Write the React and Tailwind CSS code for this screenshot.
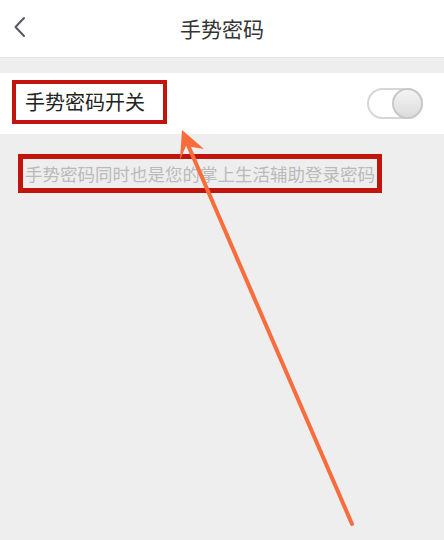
import React from 'react';

const font = { fontFamily: '"Noto Sans CJK SC", "Noto Sans", sans-serif' };

function Toggle() {
  return (
    <div className="relative w-[56px] h-[31px] rounded-full bg-white border-2 border-[#d6d6d6]">
      <div className="absolute right-[-2px] top-[-2px] w-[31px] h-[31px] rounded-full border-2 border-[#c8c8c8] bg-gradient-to-b from-[#f4f4f4] to-[#dcdcdc]" />
    </div>
  );
}

export default function App() {
  return (
    <div className="relative w-[444px] h-[540px] overflow-hidden bg-[#eeeeee]" style={font}>
      {/* header */}
      <header className="relative flex items-center justify-center h-[58px] bg-white border-b border-[#e2e2e2]">
        <svg className="absolute left-[12px] top-[16px]" width="16" height="22" viewBox="0 0 16 22" fill="none">
          <path d="M12 2 L3.5 11 L12 20" stroke="#555a64" strokeWidth="2" strokeLinecap="round" strokeLinejoin="round" />
        </svg>
        <h1 className="text-[21px] text-[#333333] leading-none">手势密码</h1>
      </header>

      <div className="h-[15px]" />

      {/* switch row */}
      <div className="flex items-center justify-between h-[61px] bg-white pl-[12px] pr-[21px]">
        <div className="flex items-center h-[44px] w-[155px] border-4 border-[#c0140c] pl-[9px] mb-[4px]">
          <span className="text-[20px] text-[#222222] leading-none">手势密码开关</span>
        </div>
        <Toggle />
      </div>

      {/* hint */}
      <div className="pl-[18px] pt-[20px]">
        <div className="flex items-center h-[39px] w-[364px] border-[5px] border-[#c0140c] pl-[2px] overflow-hidden">
          <span className="text-[17.5px] text-[#bababa] leading-none whitespace-nowrap">手势密码同时也是您的掌上生活辅助登录密码</span>
        </div>
      </div>

      {/* annotation arrow */}
      <svg className="absolute inset-0 pointer-events-none" width="444" height="540" viewBox="0 0 444 540">
        <line x1="352" y1="524" x2="185" y2="138" stroke="#fb6c3c" strokeWidth="4" strokeLinecap="round" />
        <path d="M182 130 L180 160 L186 146 L204 149 Z" fill="#fb6c3c" />
      </svg>
    </div>
  );
}
